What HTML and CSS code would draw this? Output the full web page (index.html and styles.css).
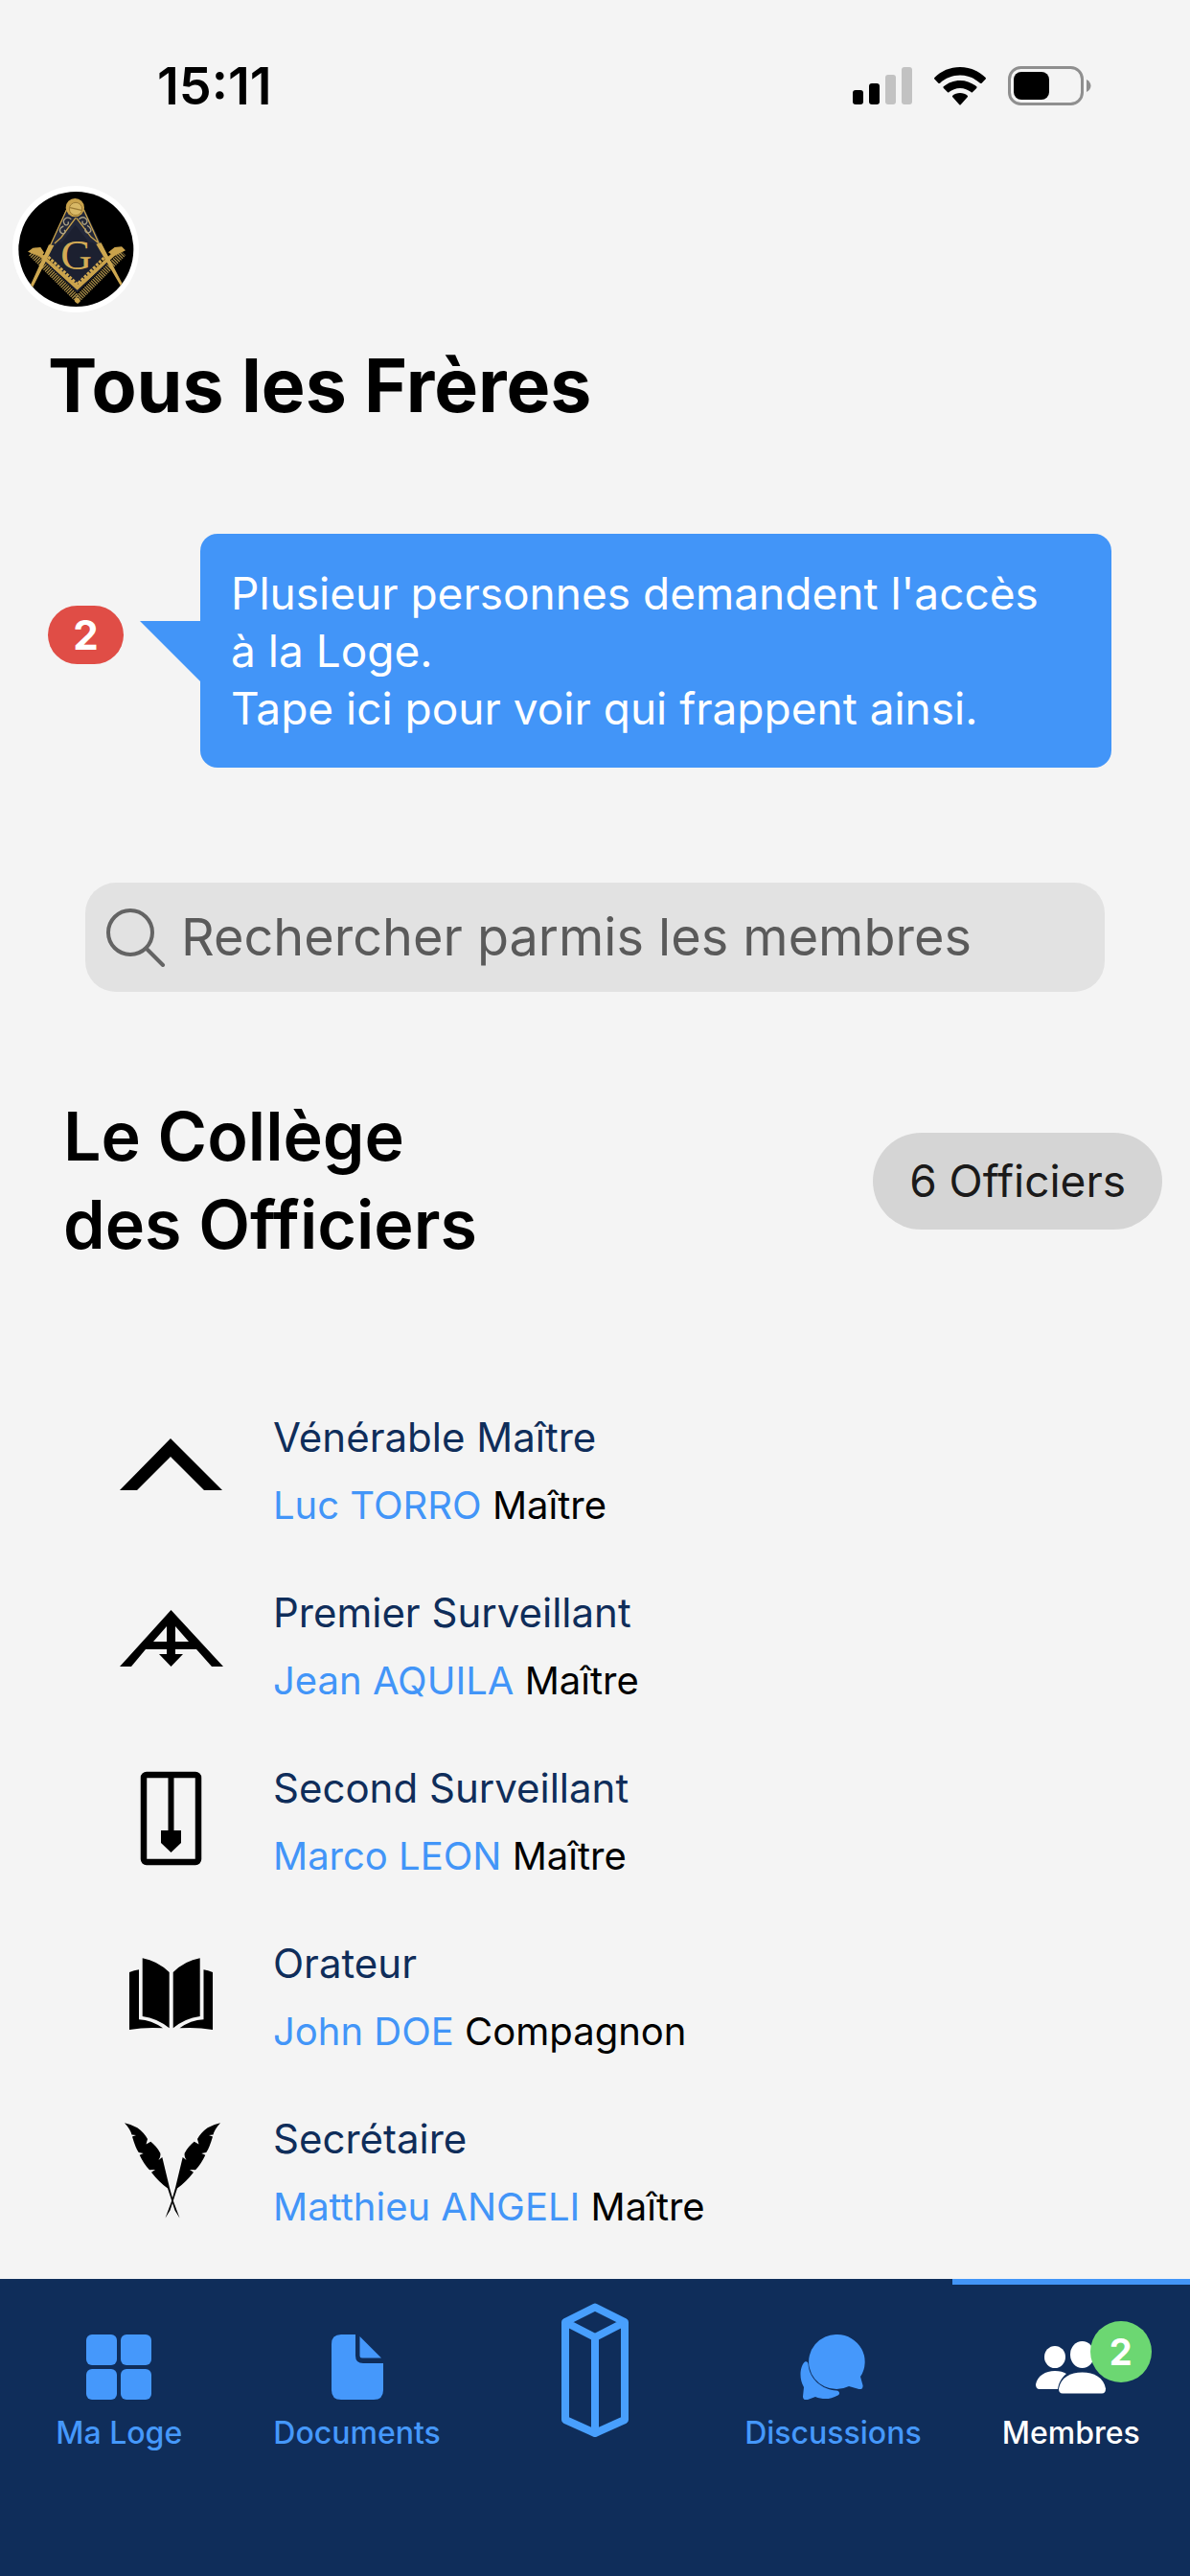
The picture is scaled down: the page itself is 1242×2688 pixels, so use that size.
FILE: index.html
```html
<!DOCTYPE html>
<html lang="fr">
<head>
    <meta charset="utf-8">
    <meta name="viewport" content="width=device-width, initial-scale=1">
    <title>Tous les Frères</title>
    <link rel="stylesheet" href="styles.css">
</head>
<body>
    <div class="status-bar">
        <span class="time">15:11</span>
        <div class="status-icons">
            <svg width="62" height="40" viewBox="0 0 62 40">
                <rect x="0" y="24" width="11" height="15" rx="3"/>
                <rect x="17" y="17" width="11" height="22" rx="3"/>
                <rect x="34" y="8" width="11" height="31" rx="3" fill="#c2c2c2"/>
                <rect x="51" y="0" width="11" height="39" rx="3" fill="#c2c2c2"/>
            </svg>
            <svg width="54" height="40" viewBox="0 0 160 118">
                <path d="M80 0c31 0 58 12 79 32q2 3 0 5l-12 12q-2 2-5 0c-17-15-38-24-62-24s-45 9-62 24q-3 2-5 0L1 37q-2-2 0-5C22 12 49 0 80 0z"/>
                <path d="M80 41c19 0 37 7 51 19q2 2 0 5l-12 12q-3 3-5 0c-9-7-21-12-34-12s-25 5-34 12q-2 3-5 0L29 65q-2-3 0-5c14-12 32-19 51-19z"/>
                <path d="M80 80c9 0 17 3 23 8q2 2 0 4l-21 24q-2 2-4 0L57 92q-2-2 0-4c6-5 14-8 23-8z"/>
            </svg>
            <svg width="87" height="42" viewBox="0 0 87 42">
                <rect x="1.5" y="1.5" width="76" height="38" rx="12" fill="none" stroke="#8f8f8f" stroke-width="3"/>
                <rect x="6" y="6" width="37" height="29" rx="8"/>
                <path d="M82 14c6 3 6 10 0 13z" fill="#8f8f8f"/>
            </svg>
        </div>
    </div>

    <main>
        <a class="avatar" href="#" aria-label="Ma Loge">
            <svg width="132" height="132" viewBox="38 42 396 396">
                <defs>
                    <clipPath id="disc"><circle cx="237" cy="240" r="180"/></clipPath>
                </defs>
                <circle cx="236" cy="240" r="198" fill="#fff"/>
                <circle cx="237" cy="240" r="180"/>
                <g clip-path="url(#disc)">
                    <path d="M232 100l98 156-90 120-94-118z" fill="#1c2030"/>
                    <!-- square -->
                    <path d="M97 252l145 144 143-144" fill="none" stroke="#a58a48" stroke-width="22" stroke-dasharray="4 3"/>
                    <path d="M106 240l135 120 131-120" fill="none" stroke="#c9a24b" stroke-width="12"/>
                    <path d="M136 276l105 98 101-98" fill="none" stroke="#1c2030" stroke-width="4"/>
                    <path d="M150 264l91 86 87-86" fill="none" stroke="#d0a850" stroke-width="9" stroke-dasharray="9 4"/>
                    <path d="M86 248l16-12 24-2 12 18-16 10zM392 244l-12-12-22 2-20 16 18 12z" fill="#c9a24b"/>
                    <!-- compasses -->
                    <path d="M205 118l-50 112 10 8 18-20h10l42-54 42 54h10l22 12 6-8-54-112z" fill="#23283a"/>
                    <path d="M207 118l-54 118M261 116l52 116M236 142l-46 62M238 142l46 60M190 204l-20 18M284 202l22 18" fill="none" stroke="#c9a24b" stroke-width="4"/>
                    <path d="M222 146c-16-12-28 4-22 14s16 2 12-6M198 168c-12 4-16 16-6 22s14-6 8-10M246 146c16-14 30 2 24 12s-16 2-12-6M272 166c12 6 16 18 6 22s-16-8-10-12" fill="none" stroke="#aaa084" stroke-width="4"/>
                    <path d="M152 226l16 2-68 134H90zM300 224l16-4 74 144h-8z" fill="#cda750"/>
                    <circle cx="234" cy="110" r="29" fill="#c9a24b"/>
                    <circle cx="236" cy="114" r="20" fill="#d8b866" stroke="#9c7b35" stroke-width="3"/>
                    <path d="M218 110l36 8" stroke="#9c7b35" stroke-width="4"/>
                    <text x="238" y="302" text-anchor="middle" class="emblem">G</text>
                    <circle cx="241" cy="400" r="8" fill="#c9a24b"/>
                </g>
            </svg>
        </a>

        <h1>Tous les Frères</h1>

        <a class="alert" href="#">
            <span class="alert-count">2</span>
            <span class="bubble">Plusieur personnes demandent l'accès à la Loge.<br>Tape ici pour voir qui frappent ainsi.</span>
        </a>

        <form class="search" role="search">
            <label for="search" aria-label="Rechercher">
                <svg width="62" height="62" viewBox="0 0 62 62" fill="none" stroke="#646464" stroke-width="4" stroke-linecap="round">
                    <circle cx="25" cy="26" r="23"/>
                    <path d="M42 43l17 17"/>
                </svg>
            </label>
            <input type="text" id="search" placeholder="Rechercher parmis les membres">
        </form>

        <section>
            <div class="section-head">
                <h2>Le Collège<br>des Officiers</h2>
                <span class="pill">6 Officiers</span>
            </div>
            <ul class="officers">
                <li>
                    <svg width="120" height="140" viewBox="0 0 120 140">
                        <path d="M7 89l53-54 54 54H95L60 54 25 89z"/>
                    </svg>
                    <div>
                        <h3>Vénérable Maître</h3>
                        <p><a href="#">Luc TORRO</a> Maître</p>
                    </div>
                </li>
                <li>
                    <svg width="120" height="140" viewBox="0 0 120 140">
                        <path fill-rule="evenodd" d="M7 90l53.500-59L115 90h-12L87 72H65v5h8L60.500 90 48 77h8v-5H34L19 90zM56 48L42 64h14zM65 48v16h14z"/>
                    </svg>
                    <div>
                        <h3>Premier Surveillant</h3>
                        <p><a href="#">Jean AQUILA</a> Maître</p>
                    </div>
                </li>
                <li>
                    <svg width="120" height="140" viewBox="0 0 120 140">
                        <rect x="32" y="20" width="57" height="91" rx="3" fill="none" stroke="#000" stroke-width="6.500"/>
                        <path d="M57.500 20h6v58H71v13l-10.500 10L50 91V78h7.500z"/>
                    </svg>
                    <div>
                        <h3>Second Surveillant</h3>
                        <p><a href="#">Marco LEON</a> Maître</p>
                    </div>
                </li>
                <li>
                    <svg width="120" height="140" viewBox="0 -3 120 140">
                        <path d="M30.700 25.300Q46 28 58.700 40v58.300Q46 88 30.700 86zM17 40q5-2 10-2.700v52Q40 90 52 98.300 34 97 17 100z"/>
                        <path d="M90.700 25.300Q75 28 62.700 40v58.300Q75 88 90.700 86zM104 40q-5-2-9.500-2.700v52Q81 90 69.500 98.300 87 97 104 100z"/>
                    </svg>
                    <div>
                        <h3>Orateur</h3>
                        <p><a href="#">John DOE</a> Compagnon</p>
                    </div>
                </li>
                <li>
                    <svg width="120" height="140" viewBox="0 -6 120 140">
                        <defs>
                            <path id="feather" d="M12 11.300Q20 13 25.300 16.300 32 21 36 28l-1.500 5.500 4.800-2.800Q46 36 49.300 42.700 50 47 47.500 50l3.800-3L59 79l4 14 6.500 17.500-5-8L57 79.500Q48 73 40 62.700l4-2.700-6 .3Q32 54 27.700 44.700l4-1.700-5-1q-3-4-6.700-16.500l4-1.500-4.500-.5Q18 18 12 11.300z"/>
                        </defs>
                        <use href="#feather"/>
                        <use href="#feather" transform="matrix(-1 0 0 1 124 0)"/>
                    </svg>
                    <div>
                        <h3>Secrétaire</h3>
                        <p><a href="#">Matthieu ANGELI</a> Maître</p>
                    </div>
                </li>
            </ul>
        </section>
    </main>

    <nav class="tab-bar">
        <a href="#">
            <svg width="68" height="68" viewBox="0 0 68 68">
                <rect width="32" height="32" rx="6"/>
                <rect x="36" width="32" height="32" rx="6"/>
                <rect y="36" width="32" height="32" rx="6"/>
                <rect x="36" y="36" width="32" height="32" rx="6"/>
            </svg>
            Ma Loge
        </a>
        <a href="#">
            <svg width="54" height="68" viewBox="0 0 54 68">
                <path d="M10 0h15v22q0 8 8 8h21v28q0 10-10 10H10Q0 68 0 58V10Q0 0 10 0z"/>
                <path d="M29.500 2L52 24.500H32q-2.500 0-2.500-2.500z"/>
            </svg>
            Documents
        </a>
        <a class="pillar" href="#" aria-label="Temple">
            <svg width="70" height="140" viewBox="0 0 70 140" fill="none" stroke="#489ffd" stroke-width="8" stroke-linejoin="round">
                <path d="M35 4.500l31 15.500v102L35 136 4 122V20zM4 20l31 16 31-16M35 36v100"/>
            </svg>
        </a>
        <a href="#">
            <svg width="68" height="68" viewBox="0 0 68 68">
                <path d="M39 0a29 28.500 0 0 1 24 44l2.500 9c.5 3-1.500 4.500-4 4L51 54A29 28.500 0 1 1 39 0z"/>
                <path d="M5 28.500c2-1 3.500.5 3.500 2.500C10 47 23 57.500 38 58.500c3.500.5 4 3.500 1.500 5-8 4.500-16 4.500-23.500 1.500l-8 3c-3 1-5-.5-5-3.500L4 55C-1.500 46 0 33 5 28.500z"/>
            </svg>
            Discussions
        </a>
        <a class="active" href="#">
            <span class="icon-wrap">
                <svg width="74" height="68" viewBox="0 0 74 68">
                    <ellipse cx="20" cy="23.500" rx="11" ry="11.500"/>
                    <path d="M4 57q-4 0-4-5c2-9 10-14 20-14 5 0 9 1 12 3-5 4-8 9-9 16z"/>
                    <ellipse cx="48.500" cy="21" rx="12.500" ry="14"/>
                    <path d="M28 61.500q-4 0-4-5C26 45 36 39.500 48.500 39.500S71 45 73 56.500q0 5-4 5z"/>
                </svg>
                <span class="tab-badge">2</span>
            </span>
            Membres
        </a>
    </nav>
</body>
</html>
```

FILE: styles.css
```css
* {
    box-sizing: border-box;
}
body {
    font-family: Inter, "Liberation Sans", sans-serif;
    margin: 0;
    min-height: 100vh;
    display: flex;
    flex-direction: column;
    background-color: #f4f4f4;
    color: #000;
}
a {
    color: #4295f8;
    text-decoration: none;
}
svg {
    display: block;
    flex-shrink: 0;
}
h1, h2, h3, p, ul {
    margin: 0;
    padding: 0;
    font-weight: 400;
}
main {
    flex: 1;
}

/* status bar */
.status-bar {
    display: flex;
    justify-content: space-between;
    align-items: center;
    padding: 58px 103px 0 164px;
}
.time {
    font-size: 54px;
    line-height: 64px;
    font-weight: 600;
}
.status-icons {
    display: flex;
    align-items: center;
    gap: 23px;
}

/* header */
.avatar {
    display: block;
    width: 132px;
    margin: 72px 0 28px 13px;
}
.emblem {
    font-family: "Liberation Serif", serif;
    font-size: 136px;
    fill: #d3ab55;
}
h1 {
    padding: 0 50px;
    font-size: 77px;
    line-height: 96px;
    font-weight: 700;
}

/* access requests */
.alert {
    display: flex;
    align-items: flex-start;
    gap: 80px;
    margin: 107px 82px 120px 50px;
}
.alert-count {
    flex-shrink: 0;
    width: 79px;
    margin-top: 75px;
    border-radius: 31px;
    background-color: #e04d46;
    color: white;
    font-size: 42px;
    line-height: 61px;
    font-weight: 700;
    text-align: center;
}
.bubble {
    position: relative;
    flex: 1;
    padding: 32px 60px 32px 32px;
    border-radius: 18px;
    background-color: #4295f8;
    color: white;
    font-size: 46px;
    line-height: 60px;
}
.bubble::before {
    content: "";
    position: absolute;
    left: -63px;
    top: 91px;
    width: 64px;
    height: 64px;
    background-color: #4295f8;
    clip-path: polygon(0 0, 100% 0, 100% 100%);
}

/* search */
.search {
    display: flex;
    align-items: center;
    gap: 16px;
    height: 114px;
    margin: 0 89px 105px;
    padding: 0 22px;
    border-radius: 32px;
    background-color: #e2e2e2;
}
.search input {
    flex: 1;
    min-width: 0;
    padding: 0;
    border: none;
    outline: none;
    background: none;
    color: #000;
    font-family: inherit;
    font-size: 54px;
    line-height: 80px;
}
.search input::placeholder {
    color: #5a5a5a;
    opacity: 1;
}

/* officers */
.section-head {
    display: flex;
    justify-content: space-between;
    align-items: center;
    margin-bottom: 142px;
    padding: 0 29px 0 66px;
}
h2 {
    font-size: 70px;
    line-height: 92px;
    font-weight: 600;
}
.pill {
    padding: 0 38px;
    border-radius: 51px;
    background-color: #d5d5d5;
    color: #1a1a1a;
    font-size: 46px;
    line-height: 101px;
}
.officers {
    display: flex;
    flex-direction: column;
    gap: 41px;
    padding: 0 40px 36px 118px;
    list-style: none;
}
.officers li {
    display: flex;
    gap: 47px;
}
.officers h3 {
    color: #0f2d5a;
    font-size: 42px;
    line-height: 68px;
}
.officers p {
    font-size: 40px;
    line-height: 74px;
}

/* tab bar */
.tab-bar {
    display: grid;
    grid-template-columns: repeat(5, 1fr);
    height: 310px;
    background-color: #0f2d5a;
}
.tab-bar a {
    display: flex;
    flex-direction: column;
    align-items: center;
    gap: 15px;
    padding-top: 52px;
    border-top: 6px solid transparent;
    color: #4598fb;
    font-size: 32px;
    line-height: 40px;
    font-weight: 500;
}
.tab-bar svg {
    fill: currentColor;
}
.tab-bar .pillar {
    padding-top: 19px;
}
.tab-bar .pillar svg {
    fill: none;
}
.tab-bar .active {
    border-top-color: #4295f8;
    color: white;
}
.icon-wrap {
    position: relative;
}
.tab-badge {
    position: absolute;
    left: 57px;
    top: -14px;
    width: 64px;
    border-radius: 50%;
    background-color: #6cd772;
    font-size: 38px;
    line-height: 64px;
    font-weight: 700;
    text-align: center;
}
```
